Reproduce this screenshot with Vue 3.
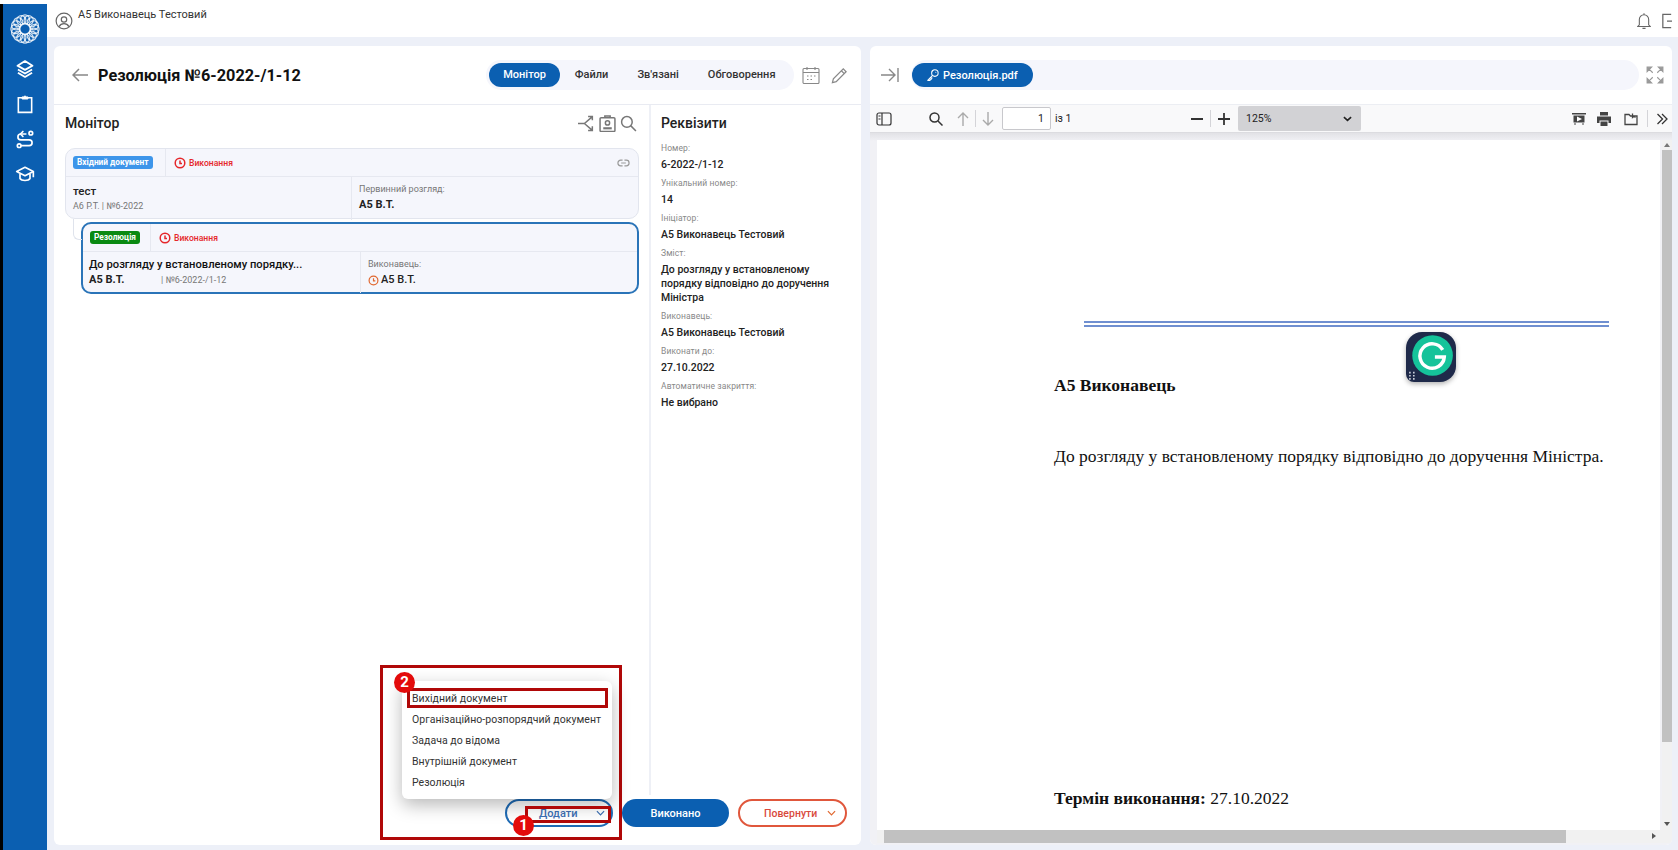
<script setup>
const tabs = ['Монітор', 'Файли', "Зв'язані", 'Обговорення']

const fields = [
  { label: 'Номер:', value: '6-2022-/1-12' },
  { label: 'Унікальний номер:', value: '14' },
  { label: 'Ініціатор:', value: 'А5 Виконавець Тестовий' },
  { label: 'Зміст:', value: 'До розгляду у встановленому порядку відповідно до доручення Міністра' },
  { label: 'Виконавець:', value: 'А5 Виконавець Тестовий' },
  { label: 'Виконати до:', value: '27.10.2022' },
  { label: 'Автоматичне закриття:', value: 'Не вибрано' }
]

const menu = [
  'Вихідний документ',
  'Організаційно-розпорядчий документ',
  'Задача до відома',
  'Внутрішній документ',
  'Резолюція'
]

// logo is a woven ring of small circles
const petals = Array.from({ length: 16 }, (_, i) => i * 22.5)
</script>

<template>
  <div class="app">
    <aside class="sidebar">
      <svg class="logo" viewBox="0 0 32 32" fill="none" stroke="#fff">
        <circle
          v-for="a in petals"
          :key="a"
          cx="16"
          cy="5.800"
          r="4.800"
          stroke-width="1.400"
          opacity=".8"
          :transform="`rotate(${a} 16 16)`"
        />
      </svg>
      <svg class="nav" viewBox="0 0 24 24" fill="none" stroke="#fff" stroke-width="2.200" stroke-linejoin="round">
        <path d="M12 2.500 3 8l9 5 9-5-9-5.500Z" />
        <path d="m3.500 12.500 8.500 5 8.500-5" />
        <path d="m3.500 16.500 8.500 5 8.500-5" />
      </svg>
      <svg class="nav" viewBox="0 0 24 24" fill="none" stroke="#fff" stroke-width="1.900">
        <path d="M8.500 4.500H4V22h16V4.500h-4.500" />
        <path d="M8.500 6V3.500h2a1.600 1.600 0 0 1 3 0h2V6z" fill="#fff" stroke-width="1.200" />
      </svg>
      <svg class="nav" viewBox="0 0 24 24" fill="none" stroke="#fff" stroke-width="2" stroke-linecap="round" stroke-linejoin="round">
        <circle cx="19" cy="5" r="2.200" />
        <circle cx="5" cy="20" r="2.200" />
        <path d="M13 6H7a3.500 3.500 0 0 0 0 7h10a3.500 3.500 0 0 1 0 7H8" />
        <path d="M9.500 3 6.500 6l3 3" />
      </svg>
      <svg class="nav" viewBox="0 0 24 24" fill="none" stroke="#fff" stroke-width="2" stroke-linejoin="round">
        <path d="M12 4 2 9l10 5 10-5-10-5Z" />
        <path d="M6 12v5.500c2 3 10 3 12 0V12M22 9v7" />
      </svg>
    </aside>

    <div class="main">
      <header class="topbar">
        <svg class="avatar" viewBox="0 0 24 24" fill="none" stroke="#666" stroke-width="1.600">
          <circle cx="12" cy="12" r="10.500" />
          <circle cx="12" cy="10" r="3.600" />
          <path d="M5.500 19.500c1.500-3 4-4 6.500-4s5 1 6.500 4" />
        </svg>
        <span class="user">А5 Виконавець Тестовий</span>
        <svg class="bell" viewBox="0 0 18 22" fill="none" stroke="#666" stroke-width="1.400">
          <path d="M3 16V9a6 6 0 0 1 12 0v7l2 2H1l2-2Z" />
          <path d="M7 20.500h4M9 1v2" />
        </svg>
        <svg class="logout" viewBox="0 0 12 18" fill="none" stroke="#666" stroke-width="1.500">
          <path d="M11 1H1v16h10M6 9h6" />
        </svg>
      </header>

      <div class="content">
        <section class="card left">
          <div class="card-head">
            <svg class="back" viewBox="0 0 16 14" fill="none" stroke="#888" stroke-width="1.500">
              <path d="M16 7H1M7 1 1 7l6 6" />
            </svg>
            <h1 class="title">Резолюція №6-2022-/1-12</h1>
            <div class="tabs">
              <span v-for="(t, i) in tabs" :key="t" class="tab" :class="{ active: i === 0 }">{{ t }}</span>
            </div>
            <svg class="calendar" viewBox="0 0 18 18" fill="none" stroke="#888" stroke-width="1.100">
              <rect x="1" y="2.500" width="16" height="15" rx="1" />
              <path d="M1 6.500h16M5 1v3M13 1v3M5 10h1.500M8.500 10H10M12 10h1.500M5 13.500h1.500M8.500 13.500H10" />
            </svg>
            <svg class="pencil" viewBox="0 0 18 18" fill="none" stroke="#888" stroke-width="1.300">
              <path d="m1.500 16.500 1-4L13 2l3 3L5.500 15.500l-4 1ZM11 4l3 3" />
            </svg>
          </div>

          <div class="body">
            <div class="monitor">
              <div class="monitor-head">
                <h2 class="sub">Монітор</h2>
                <svg class="tool" viewBox="0 0 16 16" fill="none" stroke="#777" stroke-width="1.400">
                  <path d="M0 8h6l7-6M6 8l7 6M9.500 1.500h4V5M13.500 10.500v4h-4" />
                </svg>
                <svg class="tool" viewBox="0 0 16 16" fill="none" stroke="#777" stroke-width="1.400">
                  <rect x="1" y="2.500" width="14" height="13" rx="1" />
                  <path d="M5.500 2.500V1h5v1.500" />
                  <circle cx="8" cy="7.500" r="2" />
                  <path d="M4 12.500h8" stroke-width="2" />
                </svg>
                <svg class="tool" viewBox="0 0 16 16" fill="none" stroke="#777" stroke-width="1.400">
                  <circle cx="6.500" cy="6.500" r="5" />
                  <path d="m10 10 5 5" />
                </svg>
              </div>

              <article class="doc doc-in">
                <div class="doc-top">
                  <div class="badge-cell">
                    <span class="badge blue">Вхідний документ</span>
                  </div>
                  <div class="status">
                    <svg class="clock" viewBox="0 0 12 12" fill="none" stroke="#e5262a" stroke-width="1.500">
                      <circle cx="6" cy="6" r="4.800" />
                      <path d="M6 3.500V6.500H8" />
                    </svg>
                    Виконання
                  </div>
                  <svg class="link" viewBox="0 0 14 8" fill="none" stroke="#999" stroke-width="1.300">
                    <path d="M6 1H4a3 3 0 0 0 0 6h2M8 1h2a3 3 0 0 1 0 6H8M4.500 4h5" />
                  </svg>
                </div>
                <div class="doc-row">
                  <div class="doc-main">
                    <div class="doc-name">тест</div>
                    <div class="doc-meta">А6 Р.Т. | №6-2022</div>
                  </div>
                  <div class="doc-side">
                    <div class="side-label">Первинний розгляд:</div>
                    <div class="side-value">А5 В.Т.</div>
                  </div>
                </div>
              </article>

              <article class="doc doc-res">
                <div class="doc-top">
                  <div class="badge-cell">
                    <span class="badge green">Резолюція</span>
                  </div>
                  <div class="status">
                    <svg class="clock" viewBox="0 0 12 12" fill="none" stroke="#e5262a" stroke-width="1.500">
                      <circle cx="6" cy="6" r="4.800" />
                      <path d="M6 3.500V6.500H8" />
                    </svg>
                    Виконання
                  </div>
                </div>
                <div class="doc-row">
                  <div class="doc-main">
                    <div class="doc-name long">До розгляду у встановленому порядку...</div>
                    <div class="doc-line">
                      <span class="side-value author">А5 В.Т.</span>
                      <span class="doc-meta">| №6-2022-/1-12</span>
                    </div>
                  </div>
                  <div class="doc-side">
                    <div class="side-label">Виконавець:</div>
                    <div class="side-value plain">
                      <svg class="clock small" viewBox="0 0 12 12" fill="none" stroke="#e0672f" stroke-width="1.300">
                        <circle cx="6" cy="6" r="4.800" />
                        <path d="M6 3.500V6.500H8" />
                      </svg>
                      А5 В.Т.
                    </div>
                  </div>
                </div>
              </article>
            </div>

            <div class="details">
              <h2 class="sub">Реквізити</h2>
              <div v-for="f in fields" :key="f.label" class="field">
                <div class="field-label">{{ f.label }}</div>
                <div class="field-value">{{ f.value }}</div>
              </div>
            </div>
          </div>

          <div class="actions">
            <button class="btn add">
              <span>Додати</span>
              <svg class="chev" viewBox="0 0 10 6" fill="none" stroke="#3b6fb4" stroke-width="1.300"><path d="m1 1 4 4 4-4" /></svg>
            </button>
            <button class="btn done">Виконано</button>
            <button class="btn back-btn">
              <span>Повернути</span>
              <svg class="chev" viewBox="0 0 10 6" fill="none" stroke="#e0672f" stroke-width="1.300"><path d="m1 1 4 4 4-4" /></svg>
            </button>

            <div class="callout">
              <ul class="menu">
                <li v-for="m in menu" :key="m">{{ m }}</li>
              </ul>
              <div class="mark mark-item"></div>
              <div class="mark mark-add"></div>
              <span class="num num-2">2</span>
              <span class="num num-1">1</span>
            </div>
          </div>
        </section>

        <section class="card right">
          <div class="card-head pdf-head">
            <svg class="collapse" viewBox="0 0 18 14" fill="none" stroke="#888" stroke-width="1.400">
              <path d="M0 7h14M8 1l6 6-6 6M17 0v14" />
            </svg>
            <div class="file-bar">
              <span class="file">
                <svg class="key" viewBox="0 0 14 14" fill="none" stroke="#fff" stroke-width="1.200">
                  <circle cx="9.200" cy="4.800" r="3.800" />
                  <circle cx="10.300" cy="3.700" r=".6" fill="#fff" stroke="none" />
                  <path d="M6.500 7.500 1 13v.500h2.500V12H5v-1.500h1.500" />
                </svg>
                Резолюція.pdf
              </span>
            </div>
            <svg class="expand" viewBox="0 0 16 16" fill="#999" stroke="#999">
              <path d="M1 1h4L1 5ZM3 3l3 3M15 1v4l-4-4ZM13 3l-3 3M1 15v-4l4 4ZM3 13l3-3M15 15h-4l4-4ZM13 13l-3-3" />
            </svg>
          </div>

          <div class="pdf-tools">
            <svg class="pt sb" viewBox="0 0 16 14" fill="none" stroke="#333" stroke-width="1.200">
              <rect x="1" y="1" width="14" height="12" rx="2" />
              <path d="M6 1v12M2.500 4h2M2.500 7h2" />
            </svg>
            <svg class="pt find" viewBox="0 0 14 14" fill="none" stroke="#333" stroke-width="1.500">
              <circle cx="5.500" cy="5.500" r="4.500" />
              <path d="m9 9 4.500 4.500" />
            </svg>
            <svg class="pt arrow" viewBox="0 0 12 14" fill="none" stroke="#aaa" stroke-width="1.400">
              <path d="M6 14V1M1 6l5-5 5 5" />
            </svg>
            <i class="sep"></i>
            <svg class="pt arrow" viewBox="0 0 12 14" fill="none" stroke="#aaa" stroke-width="1.400">
              <path d="M6 0v13M1 8l5 5 5-5" />
            </svg>
            <span class="page-input">1</span>
            <span class="page-of">із 1</span>
            <svg class="pt zoom-out" viewBox="0 0 14 14" stroke="#333" stroke-width="1.800"><path d="M1 7h12" /></svg>
            <i class="sep"></i>
            <svg class="pt zoom-in" viewBox="0 0 14 14" stroke="#333" stroke-width="1.800"><path d="M1 7h12M7 1v12" /></svg>
            <span class="zoom-select">
              125%
              <svg class="sel-chev" viewBox="0 0 10 6" fill="none" stroke="#222" stroke-width="1.800"><path d="m1 1 4 3.500L9 1" /></svg>
            </span>
            <svg class="pt act first" viewBox="0 0 14 14">
              <path d="M0 1h14v1.500H0zM1.500 3.500h11v7h-11z" fill="#444" />
              <path d="m5 4.500 5 2.500-5 2.500z" fill="#fff" />
              <path d="M3 11v2M11 11v2" stroke="#444" />
            </svg>
            <svg class="pt act" viewBox="0 0 14 14">
              <path d="M3 0h8v3.500H3zM0 4.500h14V11h-2.500V8.500h-9V11H0zM3.500 9.500h7V14h-7z" fill="#444" />
            </svg>
            <svg class="pt act" viewBox="0 0 14 14" fill="none" stroke="#444" stroke-width="1.300">
              <path d="M1 2.500h4l1.500 1.500H13v8.500H1z" />
              <path d="M8.500 1.500v4l1.500-1 1.500 1" />
            </svg>
            <i class="sep end"></i>
            <svg class="pt more" viewBox="0 0 12 12" fill="none" stroke="#333" stroke-width="1.300">
              <path d="m1.500 1 5 5-5 5M6 1l5 5-5 5" />
            </svg>
          </div>

          <div class="viewer">
            <div class="page">
              <div class="rule"></div>
              <p class="who">А5 Виконавець</p>
              <p class="what">До розгляду у встановленому порядку відповідно до доручення Міністра.</p>
              <p class="term"><b>Термін виконання:</b> 27.10.2022</p>
              <div class="grammarly">
                <svg viewBox="0 0 32 32" fill="none">
                  <circle cx="17" cy="15" r="13" fill="#15c39a" />
                  <path d="M23.500 11.500A7.800 7.800 0 1 0 24.500 16h-6" stroke="#fff" stroke-width="2.200" />
                  <path d="M2 26h1M4.500 26h1M2 28h1M4.500 28h1M2 30h1M4.500 30h1" stroke="#cfd3de" stroke-width="1" />
                </svg>
              </div>
            </div>
            <div class="vscroll">
              <span class="tri up"></span>
              <span class="vthumb"></span>
              <span class="tri down"></span>
            </div>
            <div class="hscroll">
              <span class="hthumb"></span>
              <span class="tri next"></span>
            </div>
          </div>
        </section>
      </div>
    </div>
  </div>
</template>

<style>
html, body { margin: 0; background: #fff; overflow: hidden; }
</style>

<style scoped>
.app {
  display: flex;
  width: 1678px;
  height: 850px;
  overflow: hidden;
  font-family: Roboto, "Liberation Sans", sans-serif;
  color: #222;
}

.sidebar {
  width: 44px;
  margin-top: 4px;
  border-left: 3px solid #000;
  background: #0b5fb1;
  display: flex;
  flex-direction: column;
  align-items: center;
}
.logo { width: 30px; height: 30px; margin-top: 10px; margin-bottom: 15px; }
.nav { width: 20px; height: 20px; margin-bottom: 15px; }

.main {
  flex: 1;
  min-width: 0;
  display: flex;
  flex-direction: column;
  background: #edf0f8;
}

.topbar {
  height: 37px;
  flex: none;
  background: #fff;
  display: flex;
  align-items: flex-start;
  box-sizing: border-box;
  padding-left: 8px;
  overflow: hidden;
}
.avatar { width: 18px; height: 18px; margin-top: 12px; }
.user { font-size: 11px; font-weight: 400; color: #333; margin: 8px 0 0 5px; line-height: 13px; }
.bell { width: 14px; height: 18px; margin: 12px 0 0 auto; }
.logout { width: 10px; height: 16px; margin: 13px 6px 0 11px; }

.content {
  flex: 1;
  min-height: 0;
  display: flex;
  gap: 9px;
  padding: 9px 6px 5px 7px;
}

.card {
  background: #fff;
  border-radius: 6px;
  display: flex;
  flex-direction: column;
  min-height: 0;
}
.left { width: 807px; }
.right { width: 802px; overflow: hidden; }

.card-head {
  height: 58px;
  flex: none;
  display: flex;
  align-items: center;
  border-bottom: 1px solid #e9ebf2;
}
.back { width: 16px; height: 14px; margin-left: 18px; }
.title { font-size: 16.300px; font-weight: 700; margin: 0 0 0 10px; color: #111; }

.tabs {
  margin-left: auto;
  height: 30px;
  box-sizing: border-box;
  padding: 3px 4px 3px 3px;
  border-radius: 15px;
  background: #f5f6fc;
  display: flex;
}
.tab {
  padding: 0 14.500px;
  font-size: 11px;
  font-weight: 500;
  line-height: 24px;
  color: #333;
  border-radius: 12px;
}
.tab.active { background: #0b5fb1; color: #fff; }
.calendar { width: 18px; height: 18px; margin-left: 8px; }
.pencil { width: 17px; height: 17px; margin: 0 13px 0 11px; }

.body { flex: 1; min-height: 0; display: flex; }

.monitor {
  width: 597px;
  flex: none;
  box-sizing: border-box;
  padding: 8px 10px 0 11px;
  border-right: 2px solid #eef0f6;
}
.monitor-head { display: flex; align-items: center; gap: 4px; height: 20px; margin-bottom: 15px; padding-right: 2px; }
.sub { font-size: 14px; font-weight: 500; margin: 0; color: #222; line-height: 20px; }
.monitor-head .sub { margin-right: auto; }
.tool { width: 17px; height: 17px; }

.doc {
  background: #f5f6fc;
  border-radius: 10px;
  box-sizing: border-box;
}
.doc-in { height: 71px; border: 1px solid #e2e5ee; }
.doc-res {
  position: relative;
  height: 72px;
  margin: 3px 0 0 16px;
  border: 2px solid #2a74b8;
}
.doc-res::before {
  content: "";
  position: absolute;
  left: -10px;
  top: -5px;
  width: 8px;
  height: 20px;
  border-left: 1px solid #dfe3ec;
  border-bottom: 1px solid #dfe3ec;
  border-bottom-left-radius: 6px;
}

.doc-top {
  height: 27px;
  display: flex;
  align-items: center;
  border-bottom: 1px solid #e6e8f0;
}
.badge-cell {
  align-self: stretch;
  display: flex;
  align-items: center;
  box-sizing: border-box;
  width: 100px;
  padding-left: 7px;
  border-right: 1px solid #e6e8f0;
}
.doc-res .badge-cell { width: 68px; }
.badge {
  font-size: 8.300px;
  font-weight: 700;
  color: #fff;
  height: 13px;
  line-height: 13px;
  padding: 0 4px;
  border-radius: 3px;
  white-space: nowrap;
}
.blue { background: #3d95ea; }
.green { background: #0a8a12; }

.status {
  display: flex;
  align-items: center;
  gap: 3px;
  margin-left: 8px;
  font-size: 8.600px;
  font-weight: 500;
  color: #e5262a;
}
.clock { width: 12px; height: 12px; }
.clock.small { width: 11px; height: 11px; }
.link { width: 13px; height: 8px; margin: 0 8px 0 auto; }

.doc-row { display: flex; height: 43px; }
.doc-main {
  width: 286px;
  flex: none;
  box-sizing: border-box;
  padding: 7px 7px 0;
  border-right: 1px solid #e6e8f0;
}
.doc-res .doc-row { height: 41px; }
.doc-res .doc-main { width: 278px; padding: 6px 6px 0; }
.doc-name { font-size: 11.500px; font-weight: 500; color: #222; line-height: 14px; }
.doc-name.long { font-size: 11.200px; color: #111; }
.doc-meta { font-size: 9px; color: #777; line-height: 14px; margin-top: 1px; }
.doc-line { display: flex; align-items: center; margin-top: 1px; }
.doc-line .doc-meta { margin: 0; }
.author { width: 72px; flex: none; }
.doc-side { padding: 6px 0 0 7px; }
.side-label { font-size: 9px; color: #777; line-height: 12px; }
.side-value { font-size: 11px; font-weight: 700; color: #222; line-height: 14px; margin-top: 3px; }
.doc-line .side-value { margin-top: 0; }
.side-value.plain { display: flex; align-items: center; gap: 2px; font-weight: 500; }

.details { flex: 1; min-width: 0; padding: 8px 14px 0 10px; }
.details .sub { margin-bottom: 9px; }
.field { margin-bottom: 5px; }
.field-label { font-size: 8.500px; font-weight: 400; color: #888; line-height: 13px; letter-spacing: .1px; }
.field-value { font-size: 10.500px; font-weight: 500; color: #222; line-height: 14px; margin-top: 3px; }

.actions {
  position: relative;
  height: 50px;
  flex: none;
  box-sizing: border-box;
  padding: 4px 14px 0 0;
  display: flex;
  justify-content: flex-end;
  align-items: flex-start;
  gap: 9px;
}
.btn {
  height: 28px;
  box-sizing: border-box;
  border-radius: 14px;
  font-family: inherit;
  font-size: 11px;
  font-weight: 500;
  padding: 0;
  display: flex;
  align-items: center;
  background: #fff;
}
.add { width: 108px; border: 2px solid #1f6bb5; color: #3b6fb4; padding-left: 32px; }
.add .chev { margin-left: 19px; }
.done { width: 107px; border: none; background: #0b5fb1; color: #fff; justify-content: center; }
.back-btn { width: 109px; border: 2px solid #e0573c; color: #d9493c; padding-left: 24px; font-size: 10.500px; }
.back-btn .chev { margin-left: 10px; }
.chev { width: 9px; height: 6px; }

.callout {
  position: absolute;
  left: 326px;
  top: -130px;
  width: 242px;
  height: 175px;
  box-sizing: border-box;
  border: 3px solid #b00808;
  pointer-events: none;
}
.menu {
  position: absolute;
  left: 19px;
  top: 13px;
  width: 210px;
  height: 118px;
  box-sizing: border-box;
  margin: 0;
  padding: 7px 0 0 10px;
  list-style: none;
  background: #fff;
  border-radius: 6px;
  box-shadow: 0 6px 18px rgba(0, 0, 0, .28);
  font-size: 10.500px;
  color: #333;
}
.menu li { height: 21px; line-height: 21px; letter-spacing: .04px; white-space: nowrap; }
.mark { position: absolute; box-sizing: border-box; border: 3px solid #b00808; }
.mark-item { left: 24px; top: 20px; width: 201px; height: 20px; }
.mark-add { left: 142px; top: 138px; width: 86px; height: 17px; }
.num {
  position: absolute;
  width: 21px;
  height: 21px;
  border-radius: 50%;
  background: #e30b0b;
  color: #fff;
  font-size: 15px;
  font-weight: 700;
  line-height: 21px;
  text-align: center;
}
.num-2 { left: 11px; top: 4px; }
.num-1 { left: 130px; top: 147px; }

.pdf-head { border-bottom-color: #eceef3; }
.collapse { width: 18px; height: 14px; margin-left: 11px; }
.file-bar {
  width: 728px;
  height: 30px;
  box-sizing: border-box;
  margin-left: 12px;
  padding: 3px 1px;
  border-radius: 15px;
  background: #f5f6fc;
}
.file {
  width: 121px;
  height: 24px;
  box-sizing: border-box;
  padding-left: 15px;
  border-radius: 12px;
  background: #0b5fb1;
  color: #fff;
  font-size: 11px;
  font-weight: 500;
  display: flex;
  align-items: center;
  gap: 4px;
}
.key { width: 12px; height: 12px; }
.expand { width: 18px; height: 18px; margin-left: 7px; }

.pdf-tools {
  height: 28px;
  flex: none;
  box-sizing: border-box;
  display: flex;
  align-items: center;
  padding-left: 6px;
  background: #f9f9fa;
  border-bottom: 1px solid #dcdce0;
}
.pt { flex: none; }
.sb { width: 16px; height: 14px; }
.find { width: 14px; height: 14px; margin: 0 14px 0 37px; }
.arrow { width: 12px; height: 14px; }
.sep { width: 1px; height: 17px; background: #d4d4d8; margin: 0 6px; flex: none; }
.page-input {
  width: 49px;
  height: 23px;
  box-sizing: border-box;
  margin-left: 8px;
  padding-right: 6px;
  border: 1px solid #c8c8cc;
  border-radius: 2px;
  background: #fff;
  font-size: 10.500px;
  line-height: 21px;
  text-align: right;
}
.page-of { font-size: 10.500px; margin-left: 4px; width: 135px; }
.zoom-out, .zoom-in { width: 14px; height: 14px; }
.zoom-select {
  width: 123px;
  height: 25px;
  box-sizing: border-box;
  margin-left: 7px;
  padding: 0 9px 0 8px;
  border-radius: 2px;
  background: #d2d2d5;
  font-size: 10.500px;
  display: flex;
  align-items: center;
  justify-content: space-between;
}
.sel-chev { width: 9px; height: 6px; }
.act { width: 14px; height: 14px; margin-right: 13px; }
.act.first { margin-left: auto; margin-right: 11px; }
.sep.end { margin: 0 8px 0 -4px; }
.more { width: 12px; height: 12px; margin-right: 4px; }

.viewer {
  flex: 1;
  min-height: 0;
  display: grid;
  grid-template-columns: 1fr 10px;
  grid-template-rows: 1fr 13px;
  padding: 7px 0 2px 7px;
  background: linear-gradient(#e2e2e6, #f1f1f5 8px);
}
.page {
  position: relative;
  min-height: 0;
  overflow: hidden;
  background: #fff;
  box-sizing: border-box;
  margin-right: 2px;
  padding: 181px 0 0 177px;
  font-family: "Liberation Serif", serif;
  font-size: 17.500px;
  color: #111;
}
.page p { margin: 0; line-height: 20px; white-space: nowrap; }
.rule {
  width: 525px;
  height: 2px;
  margin-left: 30px;
  border-top: 2px solid #6f8fd0;
  border-bottom: 2px solid #6f8fd0;
}
.who { font-weight: 700; margin-top: 48px !important; }
.what { margin-top: 51px !important; }
.term { margin-top: 322px !important; }

.grammarly {
  position: absolute;
  left: 529px;
  top: 192px;
  width: 50px;
  height: 50px;
  border-radius: 16px 16px 16px 8px;
  background: #1f2a4a;
  box-shadow: 0 2px 5px rgba(0, 0, 0, .3);
}
.grammarly svg { display: block; width: 50px; height: 50px; }

.vscroll {
  display: flex;
  flex-direction: column;
  align-items: center;
  background: #f1f1f1;
  padding: 3px 0 4px;
  box-sizing: border-box;
}
.vthumb { flex: 1; width: 100%; margin: 3px 0 80px; background: #c1c1c1; }
.hscroll {
  grid-column: 1 / 3;
  position: relative;
  background: #f1f1f1;
  padding-left: 7px;
}
.hthumb { display: block; width: 682px; height: 100%; background: #c1c1c1; }
.tri { width: 0; height: 0; border: 3px solid transparent; }
.tri.up { border-bottom: 4px solid #777; border-top: 0; }
.tri.down { border-top: 4px solid #555; border-bottom: 0; }
.tri.next { position: absolute; right: 16px; top: 3px; border-left: 4px solid #555; border-right: 0; }
</style>
